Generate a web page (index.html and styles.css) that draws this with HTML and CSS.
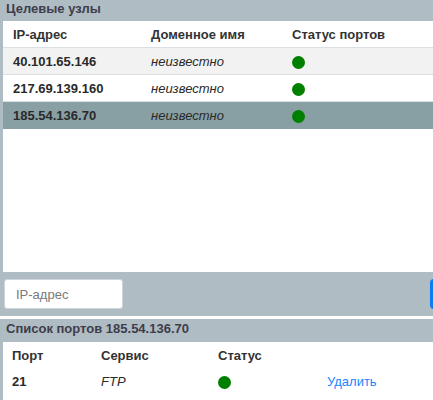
FILE: index.html
```html
<!DOCTYPE html>
<html lang="ru">
<head>
<meta charset="utf-8">
<link rel="stylesheet" href="styles.css">
</head>
<body>
<section class="panel hosts">
  <div class="panel-title">Целевые узлы</div>
  <div class="panel-body">
    <table class="grid">
      <colgroup><col class="c1"><col class="c2"><col></colgroup>
      <thead>
        <tr><th>IP-адрес</th><th>Доменное имя</th><th>Статус портов</th></tr>
      </thead>
      <tbody>
        <tr class="alt"><td class="b">40.101.65.146</td><td class="i">неизвестно</td><td><span class="dot"></span></td></tr>
        <tr><td class="b">217.69.139.160</td><td class="i">неизвестно</td><td><span class="dot"></span></td></tr>
        <tr class="sel"><td class="b">185.54.136.70</td><td class="i">неизвестно</td><td><span class="dot"></span></td></tr>
      </tbody>
    </table>
  </div>
  <div class="toolbar">
    <input class="ip-input" type="text" placeholder="IP-адрес">
    <button class="add-btn" aria-label="Добавить"></button>
  </div>
</section>
<section class="panel ports">
  <div class="panel-title">Список портов 185.54.136.70</div>
  <div class="panel-body">
    <table class="plist">
      <colgroup><col class="p1"><col class="p2"><col class="p3"><col></colgroup>
      <thead>
        <tr><th>Порт</th><th>Сервис</th><th>Статус</th><th></th></tr>
      </thead>
      <tbody>
        <tr><td class="b">21</td><td class="i">FTP</td><td><span class="dot"></span></td><td><a class="del" href="#">Удалить</a></td></tr>
      </tbody>
    </table>
  </div>
</section>
</body>
</html>
```

FILE: styles.css
```css
html, body {
  margin: 0;
  padding: 0;
  background: #ffffff;
  width: 433px;
  height: 400px;
  overflow: hidden;
  font-family: "Liberation Sans", Arial, sans-serif;
  font-size: 13px;
  color: #222;
}
.panel {
  background: #b0bcc4;
}
.panel-title {
  height: 21px;
  line-height: 17px;
  padding: 0 6px;
  font-weight: bold;
  color: #3d3d4b;
  white-space: nowrap;
}
.panel-body {
  margin-left: 3px;
  background: #fff;
}
.hosts .panel-body {
  height: 251px;
}
.hosts {
  height: 316px;
  margin-bottom: 3px;
}
.grid, .plist {
  width: 100%;
  border-collapse: collapse;
  table-layout: fixed;
}
.grid col.c1 { width: 138px; }
.grid col.c2 { width: 141px; }
.grid th, .grid td {
  text-align: left;
  padding: 0 10px;
  height: 26px;
  white-space: nowrap;
}
.grid th {
  font-weight: bold;
  color: #333;
  border-bottom: 1px solid #dde0e2;
}
.grid td {
  border-bottom: 1px solid #dde0e2;
  color: #2a2a2a;
}
.grid tr.alt td { background: #f2f2f2; }
.grid tr.sel td { background: #889fa3; border-bottom-color: #889fa3; }
.b { font-weight: bold; }
.i { font-style: italic; }
.dot {
  display: inline-block;
  width: 13px;
  height: 13px;
  border-radius: 50%;
  background: #008000;
  vertical-align: middle;
}
.toolbar {
  display: flex;
  align-items: center;
  height: 44px;
  padding-left: 4px;
  gap: 307px;
  overflow: hidden;
}
.ip-input {
  box-sizing: border-box;
  width: 119px;
  height: 30px;
  flex: none;
  border: 1px solid #cfd4d8;
  border-radius: 3px;
  background: #fff;
  padding: 0 11px;
  font-family: "Liberation Sans", Arial, sans-serif;
  font-size: 13px;
  color: #222;
  outline: none;
}
.ip-input::placeholder { color: #7a7a7a; }
.add-btn {
  flex: none;
  height: 30px;
  width: 90px;
  border: none;
  border-radius: 4px;
  background: #0d7cf2;
  padding: 0;
}
.ports .panel-title {
  height: 23px;
  line-height: 19px;
}
.ports .panel-body {
  height: 60px;
}
.plist col.p1 { width: 89px; }
.plist col.p2 { width: 117px; }
.plist col.p3 { width: 109px; }
.plist th, .plist td {
  text-align: left;
  padding: 0 9px;
  height: 26px;
  white-space: nowrap;
}
.plist th { font-weight: bold; color: #333; }
.plist td { color: #2a2a2a; }
.del {
  color: #1a84ff;
  text-decoration: none;
}
```
